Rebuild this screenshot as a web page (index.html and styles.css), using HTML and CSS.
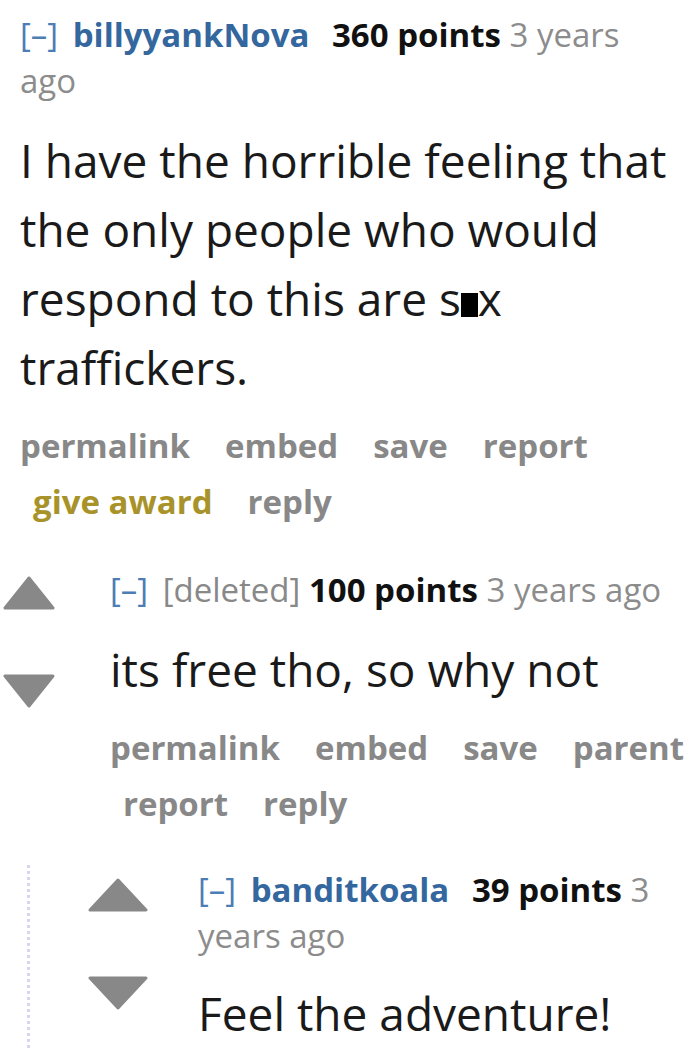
FILE: index.html
```html
<!DOCTYPE html>
<html lang="en">
<head>
    <meta charset="UTF-8">
    <meta name="viewport" content="width=device-width, initial-scale=1.0">
    <title>comments</title>
    <link rel="stylesheet" href="styles.css">
</head>
<body>
    <div class="commentarea">
        <!-- top level comment, its vote arrows are cut off by the crop -->
        <div class="comment top">
            <div class="entry">
                <p class="tagline">
                    <a class="expand">[–]</a>
                    <a class="author">billyyankNova</a>
                    <span class="score">360 points</span>
                    <time>3 years ago</time>
                </p>
                <div class="md">
                    <p>I have the horrible feeling that the only people who would respond to this are s<span class="redact"></span>x traffickers.</p>
                </div>
                <ul class="buttons">
                    <li>permalink</li>
                    <li>embed</li>
                    <li>save</li>
                    <li>report</li>
                    <li class="gold">give award</li>
                    <li>reply</li>
                </ul>
            </div>
        </div>

        <div class="comment child-1">
            <div class="midcol">
                <svg class="arrow up" viewBox="0 0 52 34"><polygon points="26,2 50,32 2,32"/></svg>
                <svg class="arrow down" viewBox="0 0 52 34"><polygon points="2,2 50,2 26,32"/></svg>
            </div>
            <div class="entry">
                <p class="tagline">
                    <a class="expand">[–]</a>
                    <span class="deleted">[deleted]</span>
                    <span class="score">100 points</span>
                    <time>3 years ago</time>
                </p>
                <div class="md">
                    <p>its free tho, so why not</p>
                </div>
                <ul class="buttons">
                    <li>permalink</li>
                    <li>embed</li>
                    <li>save</li>
                    <li>parent</li>
                    <li>report</li>
                    <li>reply</li>
                </ul>
            </div>
        </div>

        <div class="child">
            <div class="comment child-2">
                <div class="midcol">
                    <svg class="arrow up" viewBox="0 0 60 34"><polygon points="30,2 58,32 2,32"/></svg>
                    <svg class="arrow down" viewBox="0 0 60 34"><polygon points="2,2 58,2 30,32"/></svg>
                </div>
                <div class="entry">
                    <p class="tagline">
                        <a class="expand">[–]</a>
                        <a class="author">banditkoala</a>
                        <span class="score">39 points</span>
                        <time>3 years ago</time>
                    </p>
                    <div class="md">
                        <p>Feel the adventure!</p>
                    </div>
                </div>
            </div>
        </div>
    </div>
</body>
</html>
```

FILE: styles.css
```css
body {
    margin: 0;
    background-color: #fff;
    font-family: "Open Sans", "Liberation Sans", sans-serif;
    color: #1a1a1a;
    overflow: hidden;
}
.commentarea {
    padding: 12px 0 0 3px;
}
.comment {
    display: flex;
}
.entry {
    flex: 1;
    min-width: 0;
}
.top .entry {
    padding-left: 17px;
}
.tagline {
    margin: 0;
    padding-right: 20px;
    font-size: 33px;
    line-height: 46px;
    color: #888;
}
.expand {
    color: #4d7db5;
    margin-right: 6px;
}
.author {
    color: #35679f;
    font-weight: bold;
    margin-right: 14px;
}
.deleted {
    color: #888;
}
.score {
    color: #111;
    font-weight: bold;
}
time {
    color: #8c8c8c;
}
.md {
    margin-top: 22px;
}
.md p {
    margin: 0;
    font-size: 46px;
    line-height: 69px;
    color: #1a1a1a;
}
.redact {
    display: inline-block;
    width: 17px;
    height: 24px;
    background-color: #000;
    vertical-align: -1px;
}
.buttons {
    list-style: none;
    margin: 16px -30px 0 0;
    padding: 0;
    display: flex;
    flex-wrap: wrap;
}
.buttons li {
    font-size: 33px;
    font-weight: bold;
    line-height: 56px;
    color: #888;
    padding: 0 22px 0 13px;
}
.buttons li:first-child {
    padding-left: 0;
}
.buttons .gold {
    color: #a8922a;
}
.midcol {
    display: flex;
    flex-direction: column;
    align-items: flex-start;
}
.arrow {
    display: block;
    fill: #888;
    stroke: #888;
    stroke-width: 3;
    stroke-linejoin: round;
}
.child-1 {
    margin-top: 37px;
}
.child-1 .midcol {
    width: 107px;
    padding-top: 9px;
}
.child-1 .arrow {
    width: 52px;
    height: 34px;
}
.child-1 .arrow.down {
    margin-top: 64px;
}
.child {
    margin: 33px 0 0 24px;
    border-left: 3px dotted #d6d6f3;
    padding: 2px 0 12px 58px;
}
.child-2 .midcol {
    width: 110px;
    padding-top: 11px;
}
.child-2 .arrow {
    width: 60px;
    height: 34px;
}
.child-2 .arrow.down {
    margin-top: 64px;
}
.child-2 .md {
    margin-top: 20px;
}
```
